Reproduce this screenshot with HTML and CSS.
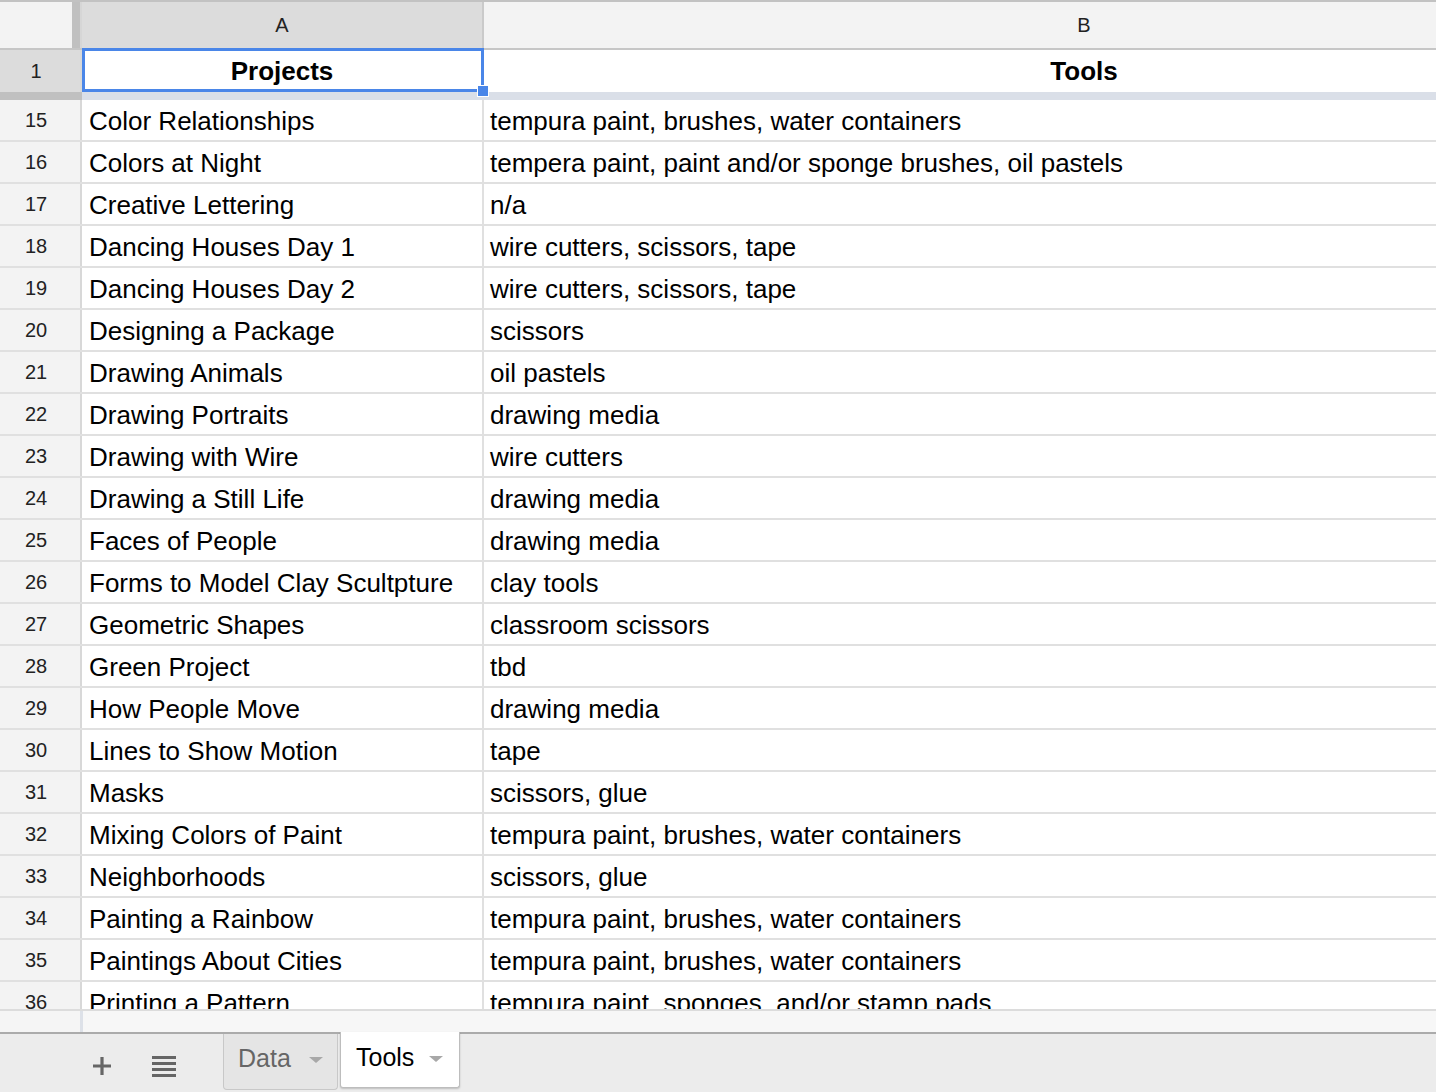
FILE: index.html
```html
<!DOCTYPE html>
<html>
<head>
<meta charset="utf-8">
<link rel="stylesheet" href="styles.css">
</head>
<body>
<div class="app">
  <div class="grid">
    <div class="row hdr">
      <div class="corner"></div>
      <div class="freeze-col"></div>
      <div class="ch ch-a">A</div>
      <div class="ch ch-b">B</div>
    </div>
    <div class="row r1">
      <div class="rh rh-sel">1</div>
      <div class="c a bold">Projects</div>
      <div class="c b bold center">Tools</div>
      <div class="selection"><span class="handle"></span></div>
    </div>
    <div class="freeze-row"><div class="fr-h"></div><div class="fr-d"></div></div>
    <div class="row"><div class="rh">15</div><div class="c a">Color Relationships</div><div class="c b">tempura paint, brushes, water containers</div></div>
    <div class="row"><div class="rh">16</div><div class="c a">Colors at Night</div><div class="c b">tempera paint, paint and/or sponge brushes, oil pastels</div></div>
    <div class="row"><div class="rh">17</div><div class="c a">Creative Lettering</div><div class="c b">n/a</div></div>
    <div class="row"><div class="rh">18</div><div class="c a">Dancing Houses Day 1</div><div class="c b">wire cutters, scissors, tape</div></div>
    <div class="row"><div class="rh">19</div><div class="c a">Dancing Houses Day 2</div><div class="c b">wire cutters, scissors, tape</div></div>
    <div class="row"><div class="rh">20</div><div class="c a">Designing a Package</div><div class="c b">scissors</div></div>
    <div class="row"><div class="rh">21</div><div class="c a">Drawing Animals</div><div class="c b">oil pastels</div></div>
    <div class="row"><div class="rh">22</div><div class="c a">Drawing Portraits</div><div class="c b">drawing media</div></div>
    <div class="row"><div class="rh">23</div><div class="c a">Drawing with Wire</div><div class="c b">wire cutters</div></div>
    <div class="row"><div class="rh">24</div><div class="c a">Drawing a Still Life</div><div class="c b">drawing media</div></div>
    <div class="row"><div class="rh">25</div><div class="c a">Faces of People</div><div class="c b">drawing media</div></div>
    <div class="row"><div class="rh">26</div><div class="c a">Forms to Model Clay Scultpture</div><div class="c b">clay tools</div></div>
    <div class="row"><div class="rh">27</div><div class="c a">Geometric Shapes</div><div class="c b">classroom scissors</div></div>
    <div class="row"><div class="rh">28</div><div class="c a">Green Project</div><div class="c b">tbd</div></div>
    <div class="row"><div class="rh">29</div><div class="c a">How People Move</div><div class="c b">drawing media</div></div>
    <div class="row"><div class="rh">30</div><div class="c a">Lines to Show Motion</div><div class="c b">tape</div></div>
    <div class="row"><div class="rh">31</div><div class="c a">Masks</div><div class="c b">scissors, glue</div></div>
    <div class="row"><div class="rh">32</div><div class="c a">Mixing Colors of Paint</div><div class="c b">tempura paint, brushes, water containers</div></div>
    <div class="row"><div class="rh">33</div><div class="c a">Neighborhoods</div><div class="c b">scissors, glue</div></div>
    <div class="row"><div class="rh">34</div><div class="c a">Painting a Rainbow</div><div class="c b">tempura paint, brushes, water containers</div></div>
    <div class="row"><div class="rh">35</div><div class="c a">Paintings About Cities</div><div class="c b">tempura paint, brushes, water containers</div></div>
    <div class="row"><div class="rh">36</div><div class="c a">Printing a Pattern</div><div class="c b">tempura paint, sponges, and/or stamp pads</div></div>
  </div>
  <div class="hscroll"><div class="hs-left"></div><div class="hs-right"></div></div>
  <div class="tabbar">
    <svg class="plus" width="20" height="20" viewBox="0 0 20 20"><path d="M10 1V19M1 10H19" stroke="#666" stroke-width="3.2" fill="none"/></svg>
    <svg class="list" width="24" height="23" viewBox="0 0 24 23"><rect x="0" y="1" width="24" height="3" fill="#666"/><rect x="0" y="7" width="24" height="3" fill="#666"/><rect x="0" y="13" width="24" height="3" fill="#666"/><rect x="0" y="19" width="24" height="3" fill="#666"/></svg>
    <div class="tab tab-data"><span class="tab-name">Data</span><span class="caret"></span></div>
    <div class="tab tab-tools"><span class="tab-name">Tools</span><span class="caret"></span></div>
  </div>
</div>
</body>
</html>
```
FILE: styles.css
```css
html, body {
  margin: 0;
  padding: 0;
  background: #ffffff;
}
body {
  font-family: "Liberation Sans", Arial, sans-serif;
  color: #000;
  width: 1436px;
  height: 1092px;
  overflow: hidden;
}
.app {
  width: 1436px;
  height: 1092px;
  display: flex;
  flex-direction: column;
  overflow: hidden;
}
.grid {
  height: 1009px;
  overflow: hidden;
  flex: none;
}
.row {
  display: flex;
  height: 40px;
  border-bottom: 2px solid #e0e0e0;
  width: 1700px;
}
.hdr {
  height: 46px;
  border-top: 2px solid #c2c2c2;
  border-bottom: 2px solid #c6c6c6;
}
.corner {
  width: 72px;
  background: #f3f3f3;
}
.freeze-col {
  width: 8px;
  background: #c0c0c0;
  border-right: 2px solid #d6d6d6;
}
.ch {
  font-size: 20px;
  color: #222;
  display: flex;
  align-items: center;
  justify-content: center;
}
.ch-a {
  width: 400px;
  background: #dcdcdc;
  border-right: 2px solid #cacaca;
}
.ch-b {
  width: 1200px;
  background: #f3f3f3;
}
.r1 {
  height: 42px;
  border-bottom: none;
  position: relative;
}
.rh {
  width: 72px;
  padding-right: 8px;
  background: #f3f3f3;
  border-right: 2px solid #d8d8d8;
  font-size: 20px;
  color: #222;
  display: flex;
  align-items: center;
  justify-content: center;
}
.rh-sel {
  background: #dcdcdc;
}
.c {
  font-size: 26px;
  line-height: 38px;
  padding-top: 2px;
  white-space: nowrap;
  overflow: hidden;
}
.r1 .c {
  line-height: 42px;
  padding-top: 0;
}
.a {
  width: 393px;
  padding-left: 7px;
  border-right: 2px solid #e0e0e0;
}
.b {
  width: 1194px;
  padding-left: 6px;
}
.bold {
  font-weight: bold;
}
.center {
  text-align: center;
  padding-left: 0;
  width: 1200px;
}
.r1 .a {
  text-align: center;
  padding-left: 0;
  width: 400px;
}
.selection {
  position: absolute;
  left: 82px;
  top: -2px;
  width: 396px;
  height: 38px;
  border: 3px solid #4a86e8;
}
.handle {
  position: absolute;
  right: -8px;
  bottom: -8px;
  width: 10px;
  height: 10px;
  background: #4a86e8;
  border: 1px solid #ffffff;
}
.freeze-row {
  display: flex;
  height: 8px;
}
.fr-h {
  width: 82px;
  background: #c0c0c0;
}
.fr-d {
  flex: 1;
  background: #dadfe8;
}
.hscroll {
  flex: none;
  display: flex;
  height: 21px;
  border-top: 2px solid #dcdcdc;
  border-bottom: 2px solid #ababab;
  background: #f7f7f7;
}
.hs-left {
  width: 80px;
  background: #f5f5f5;
  border-right: 3px solid #dde1e8;
}
.hs-right {
  flex: 1;
}
.tabbar {
  flex: 1;
  background: #ececec;
  display: flex;
  align-items: flex-start;
  padding-left: 92px;
}
.plus {
  margin-top: 22px;
  flex: none;
}
.list {
  margin-top: 21px;
  margin-left: 40px;
  flex: none;
}
.tab {
  display: flex;
  align-items: center;
  box-sizing: border-box;
  font-size: 25px;
  height: 56px;
  padding-bottom: 6px;
}
.tab-data {
  margin-left: 47px;
  width: 115px;
  padding-left: 14px;
  background: #e5e5e5;
  color: #666;
  border: 1px solid #c8c8c8;
  border-top: none;
  border-radius: 0 0 4px 4px;
}
.tab-data .caret {
  margin-left: 18px;
}
.tab-tools {
  margin-left: 2px;
  margin-top: -2px;
  width: 120px;
  height: 56px;
  padding-left: 15px;
  padding-bottom: 4px;
  background: #ffffff;
  color: #000;
  border: 1px solid #bdbdbd;
  border-top: none;
  border-radius: 0 0 3px 3px;
  box-shadow: 0 1px 2px rgba(0, 0, 0, 0.2);
}
.tab-tools .caret {
  margin-left: 15px;
}
.caret {
  width: 0;
  height: 0;
  border-left: 7px solid transparent;
  border-right: 7px solid transparent;
  border-top: 6px solid #a8a8a8;
  margin-top: 3px;
}
```
